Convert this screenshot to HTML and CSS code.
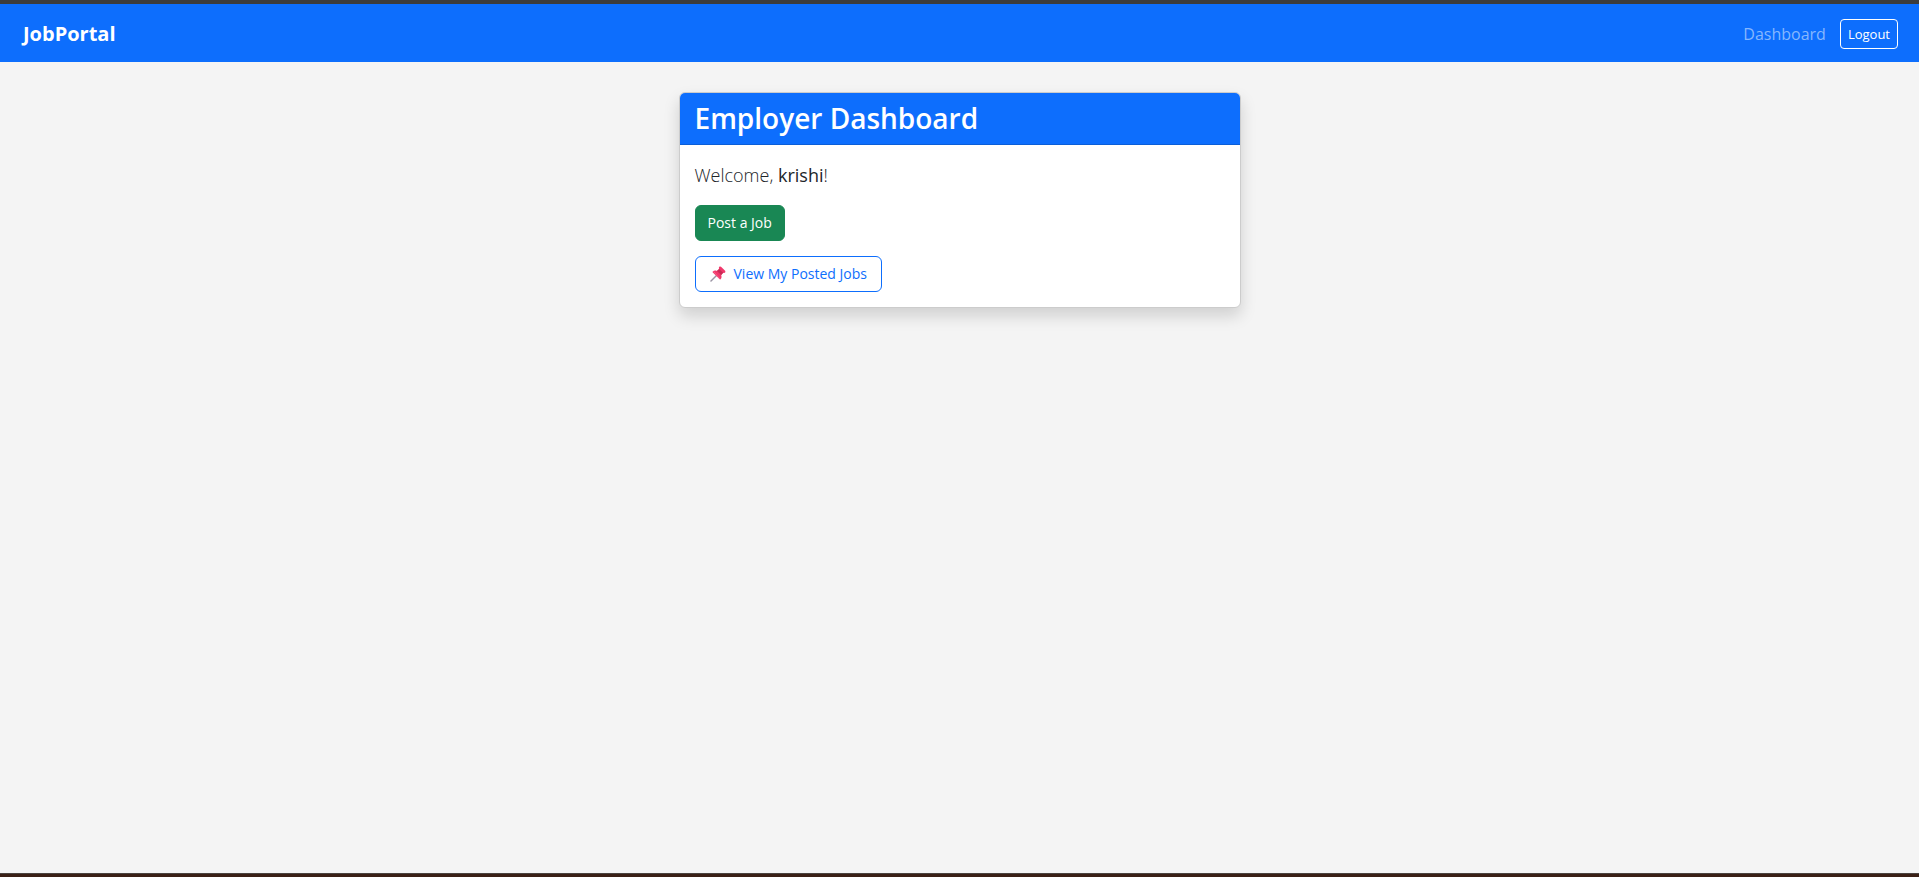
FILE: index.html
```html
<!DOCTYPE html>
<html lang="en">
<head>
<meta charset="utf-8">
<title>Employer Dashboard - JobPortal</title>
<link rel="stylesheet" href="styles.css">
</head>
<body>
<nav class="navbar">
  <a class="brand" href="#">JobPortal</a>
  <div class="nav-items">
    <a class="nav-link" href="#">Dashboard</a>
    <button class="btn-logout" type="button">Logout</button>
  </div>
</nav>
<main class="content">
  <section class="card">
    <header class="card-header"><h1 class="card-title">Employer Dashboard</h1></header>
    <div class="card-body">
      <p class="welcome">Welcome, <strong class="user">krishi</strong>!</p>
      <a class="btn btn-success" href="#">Post a Job</a>
      <a class="btn btn-outline" href="#">
        <svg class="pin" viewBox="0 0 16 16" aria-hidden="true">
          <path d="M1 15 6.5 9.5" stroke="#9a94a3" stroke-width="1.5" stroke-linecap="round"/>
          <path d="M9.3.8c.8-.6 1.7-.2 2.5.6l2.8 2.8c.8.8 1.1 1.7.5 2.4-.5.6-1.3.5-1.9.2l-2 2.2c.6 1.7.4 3.3-.7 4.2-.4.3-.8.2-1.1-.1L2.8 6.6c-.4-.4-.4-.8 0-1.2 1-1 2.6-1.2 4.1-.5l2.2-2c-.3-.7-.3-1.6.2-2.1Z" fill="#f0386b"/>
          <path d="m9.1 2.9 4.1 3.9-2 2.2-4.300-4.100Z" fill="#c92b55"/>
          <path d="m3.600 5.500 5.900 6.900" stroke="#f9648c" stroke-width=".8" stroke-linecap="round"/>
        </svg>
        <span>View My Posted Jobs</span>
      </a>
    </div>
  </section>
</main>
<footer class="bottom-edge"></footer>
</body>
</html>
```
FILE: styles.css
```css
* {
  box-sizing: border-box;
}

body {
  display: flex;
  flex-direction: column;
  min-height: 100vh;
  margin: 0;
  background: #f4f4f4;
  color: #212529;
  font-family: "Segoe UI", "Open Sans", "Noto Sans", sans-serif;
  font-size: 14px;
  line-height: 24px;
}

a {
  text-decoration: none;
}

.navbar {
  display: flex;
  align-items: center;
  justify-content: space-between;
  padding: 15px 21px 13px 23px;
  border-top: 4px solid #3c3c3c;
  background: #0d6efd;
}

.brand {
  color: #fff;
  font-size: 20px;
  font-weight: 700;
}

.nav-items {
  display: flex;
  align-items: center;
  gap: 14px;
}

.nav-link {
  color: #86b7fe;
  font-size: 16px;
}

.btn-logout {
  height: 30px;
  padding: 0 7px;
  border: 1px solid #fff;
  border-radius: 4px;
  background: transparent;
  color: #fff;
  font: inherit;
  font-size: 13px;
}

.content {
  flex: 1;
  padding: 30px 16px;
}

.card {
  max-width: 562px;
  margin: 0 auto;
  border: 1px solid #ccc;
  border-radius: 6px;
  background: #fff;
  box-shadow: 0 8px 16px rgba(0, 0, 0, 0.15);
}

.card-header {
  padding: 8px 15px;
  border-bottom: 1px solid #0b5ed7;
  border-radius: 5px 5px 0 0;
  background: #0d6efd;
  color: #fff;
}

.card-title {
  margin: 0;
  font-size: 28px;
  font-weight: 600;
  line-height: 35px;
}

.card-body {
  display: flex;
  flex-direction: column;
  align-items: flex-start;
  gap: 15px;
  padding: 15px;
}

.welcome {
  margin: 0;
  font-size: 18px;
  font-weight: 300;
  line-height: 30px;
}

.user {
  font-weight: 500;
}

.btn {
  display: flex;
  align-items: center;
  height: 36px;
  padding: 0 12px;
  border: 1px solid transparent;
  border-radius: 6px;
}

.btn-success {
  border-color: #198754;
  background: #198754;
  color: #fff;
}

.btn-outline {
  gap: 8px;
  padding: 0 14px;
  border-color: #0d6efd;
  color: #0d6efd;
}

.pin {
  width: 16px;
  height: 16px;
  fill: none;
}

.bottom-edge {
  height: 4px;
  border-top: 1px solid #4a4340;
  background: #3a2015;
}
```
